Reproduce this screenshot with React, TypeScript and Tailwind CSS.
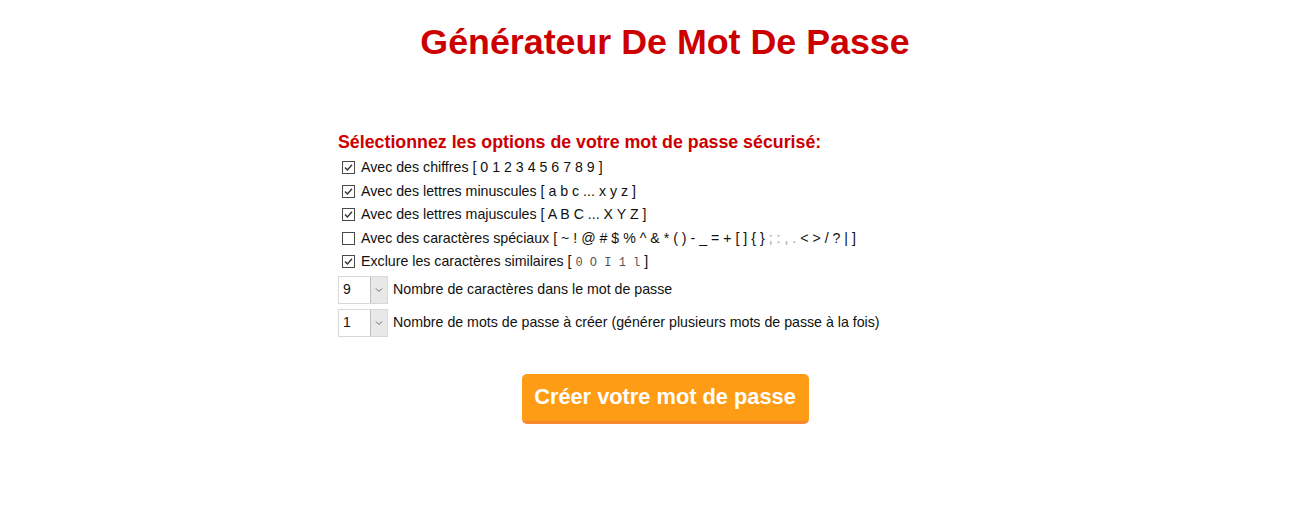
import React from "react";

const Box = ({ checked }: { checked: boolean }) => (
  <svg width="13" height="13" viewBox="0 0 13 13" className="shrink-0">
    <rect x="0.5" y="0.5" width="12" height="12" fill="#fff" stroke="#4a4a4a" strokeWidth="1" />
    {checked && (
      <path d="M3 6.5 L5.4 9 L10 3.8" fill="none" stroke="#333" strokeWidth="1.4" />
    )}
  </svg>
);

const Row = ({ checked, children }: { checked: boolean; children: React.ReactNode }) => (
  <div className="flex items-center h-[23.5px] pl-[4px]">
    <Box checked={checked} />
    <span className="ml-[6px] whitespace-pre">{children}</span>
  </div>
);

const Select = ({ value }: { value: string }) => (
  <div className="flex h-[28px] w-[50px] border border-[#d8d8d8] bg-white">
    <div className="flex-1 flex items-center pl-[4px] text-[14px] text-[#111]">{value}</div>
    <div className="w-[17px] bg-[#e8e8e8] border-l border-[#bdbdbd] flex items-center justify-center">
      <svg width="8" height="6" viewBox="0 0 8 6">
        <path d="M1 1.5 L4 4.5 L7 1.5" fill="none" stroke="#666" strokeWidth="1" />
      </svg>
    </div>
  </div>
);

export default function App() {
  const gray = "text-[#9a9a9a]";
  return (
    <div
      className="w-[1300px] h-[511px] bg-white text-[#111]"
      style={{ fontFamily: '"Liberation Sans", Arial, sans-serif' }}
    >
      <h1 className="pt-[22px] pl-[30px] text-center text-[35.8px] leading-[40px] font-bold text-[#cc0000]">
        Générateur De Mot De Passe
      </h1>
      <div className="w-[624px] mx-auto mt-[70px]">
        <div className="text-[17.8px] leading-[20px] font-bold text-[#cc0000]">
          Sélectionnez les options de votre mot de passe sécurisé:
        </div>
        <div className="mt-[4px] text-[14.2px]">
          <Row checked>Avec des chiffres [ 0 1 2 3 4 5 6 7 8 9 ]</Row>
          <Row checked>Avec des lettres minuscules [ a b c ... x y z ]</Row>
          <Row checked>Avec des lettres majuscules [ A B C ... X Y Z ]</Row>
          <Row checked={false}>
            Avec des caractères spéciaux [ ~ ! @ # $ % ^ & * ( ) - _ = + [ ] {"{"} {"}"}{" "}
            <span className={gray}>; : , .</span> &lt; &gt; / ? | ]
          </Row>
          <Row checked>
            Exclure les caractères similaires [{" "}
            <span
              className="text-[12px] text-[#555]"
              style={{ fontFamily: '"Liberation Mono", "Courier New", monospace' }}
            >
              0 O I 1 l
            </span>{" "}
            ]
          </Row>
        </div>
        <div className="mt-[2px] flex flex-col gap-[5px] text-[14.2px]">
          <div className="flex items-center">
            <Select value="9" />
            <span className="ml-[5px]">Nombre de caractères dans le mot de passe</span>
          </div>
          <div className="flex items-center">
            <Select value="1" />
            <span className="ml-[5px]">
              Nombre de mots de passe à créer (générer plusieurs mots de passe à la fois)
            </span>
          </div>
        </div>
      </div>
      <div className="mt-[37px] pl-[30px] flex justify-center">
        <button className="w-[287px] h-[50px] rounded-[5px] bg-[#ff9c16] border-b-[3px] border-[#f5892b] text-white font-bold text-[21.8px]">
          Créer votre mot de passe
        </button>
      </div>
    </div>
  );
}
